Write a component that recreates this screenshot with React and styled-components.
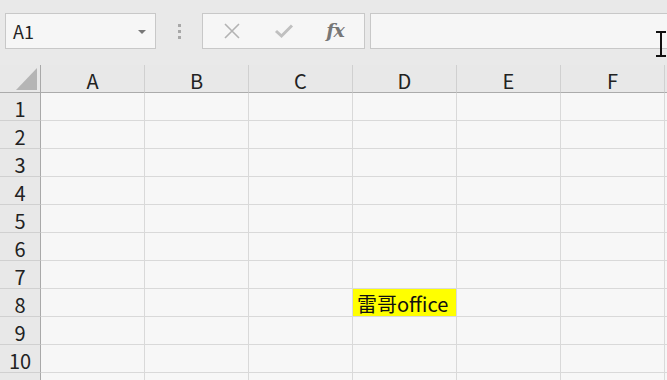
import React from "react";
import styled, { createGlobalStyle } from "styled-components";

const Global = createGlobalStyle`
  html, body { margin: 0; padding: 0; background: #f7f7f7; overflow: hidden; }
  body { font-family: "Noto Sans CJK SC", "Noto Sans", sans-serif; }
`;

const Page = styled.div`
  width: 667px;
  height: 380px;
  overflow: hidden;
  position: relative;
  background: #f7f7f7;
`;

const Toolbar = styled.div`
  height: 65px;
  box-sizing: border-box;
  padding: 13px 0 0 5px;
  display: flex;
  align-items: flex-start;
  background: #e9e9e9;
`;

const Box = styled.div`
  height: 36px;
  box-sizing: border-box;
  border: 1px solid #c8c8c8;
  background: #f6f6f6;
  display: flex;
  align-items: center;
`;

const NameBox = styled(Box)`
  width: 151px;
  padding: 0 9px 0 7px;
  justify-content: space-between;
  font-family: "Noto Sans CJK SC", "Noto Sans", sans-serif;
  font-size: 18px;
  color: #222;
`;

const Caret = styled.span`
  width: 0;
  height: 0;
  border-left: 4px solid transparent;
  border-right: 4px solid transparent;
  border-top: 4px solid #777;
  margin-top: 2px;
`;

const Grip = styled.div`
  width: 46px;
  height: 36px;
  display: flex;
  flex-direction: column;
  align-items: center;
  justify-content: center;
  gap: 3px;
`;

const Dot = styled.span`
  width: 3px;
  height: 3px;
  background: #a8a8a8;
`;

const ButtonBox = styled(Box)`
  width: 163px;
  justify-content: space-around;
  padding: 0 4px;
`;

const Fx = styled.span`
  font-family: "DejaVu Serif", "Liberation Serif", serif;
  font-style: italic;
  font-weight: bold;
  font-size: 19px;
  color: #777;
  letter-spacing: -1px;
  margin-top: -2px;
`;

const FormulaBox = styled(Box)`
  margin-left: 5px;
  flex: 1;
  border-right: none;
`;

const Cursor = styled.svg`
  position: absolute;
  left: 655px;
  top: 31px;
`;

const Grid = styled.div`
  display: grid;
  grid-template-columns: 41px repeat(6, 104px) 1fr;
  grid-auto-rows: 28px;
`;

const Cell = styled.div`
  box-sizing: border-box;
  border-right: 1px solid #d9d9d9;
  border-bottom: 1px solid #d9d9d9;
  background: ${(p) => (p.$fill ? p.$fill : "#f7f7f7")};
  font-family: "Noto Sans CJK SC", "Noto Sans", sans-serif;
  font-size: 20px;
  color: #111;
  display: flex;
  align-items: center;
  padding-left: 4px;
  padding-top: 1px;
  white-space: nowrap;
`;

const HeadCell = styled.div`
  box-sizing: border-box;
  background: #e8e8e8;
  border-right: 1px solid ${(p) => (p.$corner ? "#a9a9a9" : "#d0d0d0")};
  border-bottom: 1px solid #ababab;
  display: flex;
  align-items: center;
  justify-content: center;
  font-family: "Noto Sans CJK SC", "Noto Sans", sans-serif;
  font-size: 20px;
  color: #222;
  position: relative;
  padding-top: 3px;
`;

const ColHead = styled(HeadCell)``;

const RowHead = styled(HeadCell)`
  border-bottom: 1px solid #d0d0d0;
  border-right: 1px solid #a9a9a9;
  padding-top: 4px;
`;

const Corner = styled.svg`
  position: absolute;
  right: 3px;
  bottom: 2px;
`;

const cols = ["A", "B", "C", "D", "E", "F", ""];
const rows = [1, 2, 3, 4, 5, 6, 7, 8, 9, 10, null];

export default function App() {
  return (
    <Page>
      <Global />
      <Toolbar>
        <NameBox>
          <span>A1</span>
          <Caret />
        </NameBox>
        <Grip>
          <Dot />
          <Dot />
          <Dot />
        </Grip>
        <ButtonBox>
          <svg width="18" height="18" viewBox="0 0 18 18">
            <path d="M2 2 L16 16 M16 2 L2 16" stroke="#b3b3b3" strokeWidth="1.6" fill="none" />
          </svg>
          <svg width="20" height="16" viewBox="0 0 20 16">
            <path d="M2 8 L7.5 13 L18 2.5" stroke="#c0c0c0" strokeWidth="3" fill="none" />
          </svg>
          <Fx>fx</Fx>
        </ButtonBox>
        <FormulaBox />
      </Toolbar>
      <Cursor width="12" height="26" viewBox="0 0 12 26">
        <path d="M1 1 H11 M6 1 V25 M1 25 H11" stroke="#111" strokeWidth="2" fill="none" />
      </Cursor>
      <Grid>
        <ColHead $corner>
          <Corner width="21" height="22" viewBox="0 0 21 22">
            <polygon points="21,0 21,22 0,22" fill="#b5b5b5" />
          </Corner>
        </ColHead>
        {cols.map((c, i) => (
          <ColHead key={i}>{c}</ColHead>
        ))}
        {rows.map((r, ri) => (
          <React.Fragment key={ri}>
            <RowHead>{r}</RowHead>
            {cols.map((c, i) => (
              <Cell key={i} $fill={r === 8 && c === "D" ? "#ffff00" : null}>
                {r === 8 && c === "D" ? "雷哥office" : ""}
              </Cell>
            ))}
          </React.Fragment>
        ))}
      </Grid>
    </Page>
  );
}
